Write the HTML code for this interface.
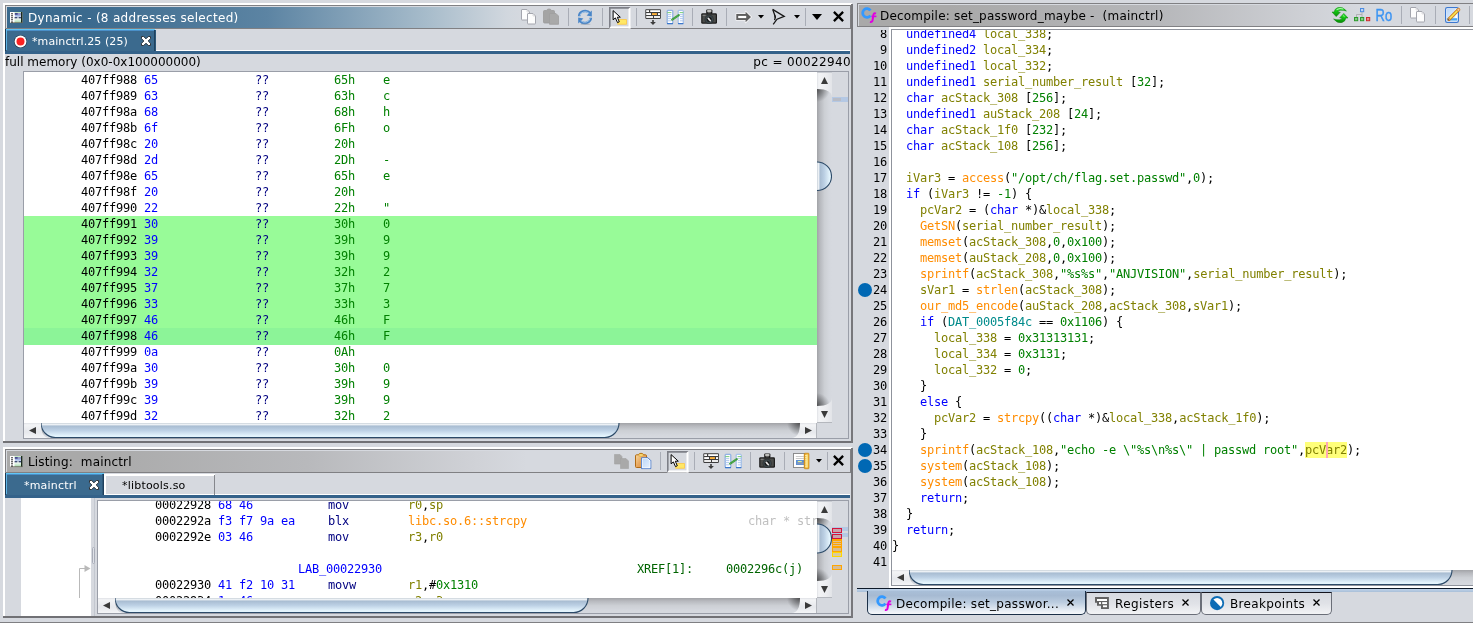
<!DOCTYPE html>
<html lang="en">
<head>
<meta charset="utf-8">
<title>Ghidra Debugger - mainctrl</title>
<style>
html,body{margin:0;padding:0;background:#d6d9df;}
body{width:1473px;height:623px;overflow:hidden;position:relative;font-family:"DejaVu Sans","Liberation Sans",sans-serif;font-size:12px;color:#000;}
#root{position:absolute;left:0;top:0;width:1473px;height:623px;overflow:hidden;will-change:transform;}
.a{position:absolute;}
.ui{position:absolute;font-family:"DejaVu Sans","Liberation Sans",sans-serif;font-size:12px;line-height:15px;white-space:pre;}
.mono{font-family:"DejaVu Sans Mono","Liberation Mono",monospace;font-size:12px;letter-spacing:-0.2246px;white-space:pre;line-height:16px;height:16px;}
.row{position:absolute;left:0;right:0;height:16px;}
.row span{position:absolute;top:0;}
.t{color:#0000ff}
.v{color:#808000}
.f{color:#ff8c00}
.c{color:#008000}
.g{color:#008b8b}
.n{color:#000080}
.gr{color:#008000}
.cm{color:#c0c0c0}
.xr{color:#006400}
.hl{background:#ffff7a;padding:1px 0}
.sep{position:absolute;width:1px;height:18px;background:#a9adb6;}
svg{position:absolute;overflow:visible;}
</style>
</head>
<body>
<div id="root">
<svg width="0" height="0" style="left:0;top:0"><defs><linearGradient id="vtr" x1="0" y1="0" x2="1" y2="0"><stop offset="0" stop-color="#a2a3a7"/><stop offset="0.2" stop-color="#b7b9be"/><stop offset="0.5" stop-color="#cccfd4"/><stop offset="0.8" stop-color="#d4d7dd"/><stop offset="1" stop-color="#d6d9df"/></linearGradient><linearGradient id="htr" x1="0" y1="0" x2="0" y2="1"><stop offset="0" stop-color="#a2a3a7"/><stop offset="0.2" stop-color="#b7b9be"/><stop offset="0.5" stop-color="#cccfd4"/><stop offset="0.8" stop-color="#d4d7dd"/><stop offset="1" stop-color="#d6d9df"/></linearGradient><linearGradient id="vth" x1="0" y1="0" x2="1" y2="0"><stop offset="0" stop-color="#c8d0d8"/><stop offset="0.1" stop-color="#eef2f6"/><stop offset="0.22" stop-color="#a9bdd2"/><stop offset="0.5" stop-color="#bcd0e4"/><stop offset="0.9" stop-color="#e6f6fe"/><stop offset="1" stop-color="#dff0fa"/></linearGradient><linearGradient id="hth" x1="0" y1="0" x2="0" y2="1"><stop offset="0" stop-color="#c8d0d8"/><stop offset="0.1" stop-color="#eef2f6"/><stop offset="0.22" stop-color="#a9bdd2"/><stop offset="0.5" stop-color="#bcd0e4"/><stop offset="0.9" stop-color="#e6f6fe"/><stop offset="1" stop-color="#dff0fa"/></linearGradient><linearGradient id="vbt" x1="0" y1="0" x2="1" y2="0"><stop offset="0" stop-color="#dfe1e5"/><stop offset="0.12" stop-color="#f3f4f6"/><stop offset="0.6" stop-color="#ecedf0"/><stop offset="1" stop-color="#e2e4e8"/></linearGradient><linearGradient id="hbt" x1="0" y1="0" x2="0" y2="1"><stop offset="0" stop-color="#dfe1e5"/><stop offset="0.12" stop-color="#f3f4f6"/><stop offset="0.6" stop-color="#e6e8ec"/><stop offset="1" stop-color="#f4f5f7"/></linearGradient><radialGradient id="rsh" cx="0" cy="0" r="1" gradientUnits="objectBoundingBox"><stop offset="0" stop-color="#000" stop-opacity="0.52"/><stop offset="0.45" stop-color="#000" stop-opacity="0.3"/><stop offset="1" stop-color="#000" stop-opacity="0"/></radialGradient></defs></svg>
<!-- pane bevels -->
<div class="a" style="left:3px;top:3px;width:849px;height:2px;background:#fff;"></div>
<div class="a" style="left:3px;top:3px;width:2px;height:438px;background:#fff;"></div>
<div class="a" style="left:3px;top:441px;width:850px;height:2px;background:#717175;"></div>
<div class="a" style="left:851px;top:4px;width:2px;height:439px;background:#77777b;"></div>
<div class="a" style="left:3px;top:447px;width:849px;height:2px;background:#fff;"></div>
<div class="a" style="left:3px;top:447px;width:2px;height:169px;background:#fff;"></div>
<div class="a" style="left:3px;top:616px;width:850px;height:2px;background:#717175;"></div>
<div class="a" style="left:851px;top:448px;width:2px;height:170px;background:#77777b;"></div>
<div class="a" style="left:0px;top:622px;width:1473px;height:1px;background:#7f7f82;"></div>
<!-- Dynamic listing panel -->
<div class="a" style="left:5px;top:5px;width:846px;height:24px;border:1px solid #808083;box-sizing:border-box;background:#d6d9df;"></div><div class="a" style="left:7px;top:7px;width:842px;height:21px;background:linear-gradient(90deg,#3a6a8e 0px,#3b6a8e 80px,#5c84a3 260px,#a7bccb 420px,#d1d7de 500px,#d6d9df 520px);"></div>
<svg style="left:10px;top:12px" width="13" height="11" viewBox="0 0 13 11"><defs><linearGradient id="pg" x1="0" y1="0" x2="0" y2="1"><stop offset="0" stop-color="#b8e8b0"/><stop offset="0.15" stop-color="#e8eefc"/><stop offset="0.6" stop-color="#f4fbf4"/><stop offset="0.85" stop-color="#bfe6c6"/><stop offset="1" stop-color="#9ab89a"/></linearGradient></defs><rect x="0" y="0" width="12.5" height="11" fill="#fff"/><rect x="4.5" y="0" width="7" height="11" fill="url(#pg)"/><rect x="11" y="0" width="1.5" height="11" fill="#1c2a1c"/><rect x="0.5" y="10.2" width="12" height="0.9" fill="#6a6a5a" opacity="0.8"/><circle cx="2" cy="1.70" r="0.75" fill="#000"/><circle cx="2" cy="3.75" r="0.75" fill="#000"/><circle cx="2" cy="5.80" r="0.75" fill="#000"/><circle cx="2" cy="7.85" r="0.75" fill="#000"/><circle cx="2" cy="9.90" r="0.75" fill="#000"/><rect x="4.8" y="1.2" width="3" height="1.5" fill="#1c2270"/><rect x="7.8" y="1.5" width="3.2" height="1" fill="#4a4aa0"/><rect x="5" y="3" width="5.8" height="1.6" fill="#8aa2e0" opacity="0.8"/><rect x="4.6" y="5.2" width="2.8" height="1.1" fill="#0e2050"/><rect x="8.6" y="5.2" width="2.6" height="1.1" fill="#0e2050"/></svg>
<div class="ui" style="left:28px;top:11px;color:#fff;letter-spacing:0.3px;">Dynamic - (8 addresses selected)</div>
<svg style="left:521px;top:9px" width="15" height="16" viewBox="0 0 15 16"><path d="M0.5,1 Q0.5,0.5 1,0.5 H6 L8.5,3 V10.5 Q8.5,11 8,11 H1 Q0.5,11 0.5,10.5 Z" fill="#fdfdfd" stroke="#a4a6ae" stroke-width="1"/><path d="M6.5,5 Q6.5,4.5 7,4.5 H12 L14.5,7 V14.5 Q14.5,15 14,15 H7 Q6.5,15 6.5,14.5 Z" fill="#fdfdfd" stroke="#a4a6ae" stroke-width="1"/><path d="M6,0.8 V3 H8.3" fill="none" stroke="#d0d0d4" stroke-width="0.7"/><path d="M12,4.8 V7 H14.3" fill="none" stroke="#d0d0d4" stroke-width="0.7"/></svg>
<svg style="left:543px;top:9px" width="16" height="16" viewBox="0 0 16 16"><path d="M1.5,1.5 H3.5 Q4,0 6,0 Q8,0 8.5,1.5 H10.5 Q11.5,1.5 11.5,2.5 V13 Q11.5,14 10.5,14 H1.5 Q0.5,14 0.5,13 V2.5 Q0.5,1.5 1.5,1.5 Z" fill="#a4a4a4" stroke="#9a9a9a" stroke-width="0.8"/><path d="M6.5,4.5 H13 L15.5,7 V15.3 H6.5 Z" fill="#a9a9a9" stroke="#9e9e9e" stroke-width="0.8"/></svg>
<div class="sep" style="left:568px;top:8px"></div>
<div class="sep" style="left:602px;top:8px"></div>
<div class="sep" style="left:636px;top:8px"></div>
<div class="sep" style="left:692px;top:8px"></div>
<div class="sep" style="left:726px;top:8px"></div>
<div class="sep" style="left:805px;top:8px"></div>
<svg style="left:578px;top:10px" width="14" height="15" viewBox="0 0 14 15"><path d="M1.2,6.2 A6,5.2 0 0 1 12,3.2" fill="none" stroke="#4a86c8" stroke-width="2.6"/><path d="M13.8,0.6 L13.8,6.4 L8.6,5.4 Z" fill="#4a86c8"/><path d="M12.8,7.8 A6,5.2 0 0 1 2,10.8" fill="none" stroke="#4a86c8" stroke-width="2.6"/><path d="M0.2,13.4 L0.2,7.6 L5.4,8.6 Z" fill="#4a86c8"/><path d="M2,5.6 A5.2,4.4 0 0 1 11.2,3.4" fill="none" stroke="#b8d4f0" stroke-width="0.8"/><path d="M12,8.4 A5.2,4.4 0 0 1 2.8,10.6" fill="none" stroke="#b8d4f0" stroke-width="0.8"/><ellipse cx="7.5" cy="14.2" rx="5" ry="0.7" fill="#9098a4" opacity="0.5"/></svg>
<svg style="left:608.5px;top:6.6px" width="22" height="22" viewBox="0 0 22 22"><rect x="0" y="0" width="21.5" height="21.4" fill="#d6d9df"/><rect x="0.6" y="19.4" width="20.9" height="2" fill="#fff"/><rect x="19.5" y="0.6" width="2" height="20.799999999999997" fill="#fff"/><path d="M0,0 H21.5 L19.5,1.8 H1.6 V19.4 L0,21.4 Z" fill="#7e8088"/><rect x="8.8" y="12.6" width="8.6" height="4.6" fill="#ffe866" stroke="#ffc840" stroke-width="0.8"/><path d="M4.1,3.6 L4.1,12.8 L6.4,10.9 L8.5,15.6 L10.3,14.8 L8.3,10.2 L11.3,10.2 Z" fill="#fff" stroke="#000" stroke-width="1" stroke-linejoin="miter"/></svg>
<svg style="left:645px;top:9px" width="16" height="16" viewBox="0 0 16 16"><rect x="0.3" y="0.3" width="15.6" height="9.6" rx="0.8" fill="#3d3d3d"/><rect x="1.2" y="1.2" width="2.8" height="1.8" fill="#fff"/><rect x="5.2" y="1.2" width="9.8" height="1.8" fill="#fff"/><rect x="1.2" y="4.1" width="4.8" height="1.9" fill="#fff"/><rect x="7" y="4.1" width="4.9" height="1.9" fill="#fbb03b"/><rect x="13" y="4.1" width="2" height="1.9" fill="#fff"/><rect x="1.2" y="7.1" width="6.8" height="1.8" fill="#fff"/><rect x="9" y="7.1" width="6" height="1.8" fill="#fff"/><path d="M7.2,11 H8.8 V13 H10.9 L8,16 L5.1,13 H7.2 Z" fill="#3d3d3d"/></svg>
<svg style="left:667px;top:10px" width="17" height="15" viewBox="0 0 17 15"><rect x="0.2" y="0.3" width="5.6" height="13.4" rx="0.6" fill="#fff" stroke="#6a98dc" stroke-width="0.9"/><rect x="11.2" y="0.3" width="5" height="13.4" rx="0.6" fill="#fff" stroke="#8ab0e8" stroke-width="0.9"/><rect x="0" y="13" width="6" height="1.2" fill="#3c78cc"/><rect x="11" y="13" width="5.4" height="1.2" fill="#3c78cc"/><rect x="0.2" y="2.1" width="4.2" height="1" fill="#7acc7a"/><rect x="12.6" y="2.1" width="3.8" height="1" fill="#7acc7a"/><rect x="0.4" y="4.2" width="3.8" height="0.9" fill="#a8c4ec"/><rect x="12.8" y="4.2" width="3.4" height="0.9" fill="#a8c4ec"/><rect x="0.4" y="6.2" width="3.8" height="0.9" fill="#a8c4ec"/><rect x="12.8" y="6.2" width="3.4" height="0.9" fill="#a8c4ec"/><rect x="0.4" y="8.2" width="3.8" height="0.9" fill="#a8c4ec"/><rect x="12.8" y="8.2" width="3.4" height="0.9" fill="#a8c4ec"/><rect x="0.4" y="10.4" width="3.8" height="0.9" fill="#a8c4ec"/><rect x="12.8" y="10.4" width="3.4" height="0.9" fill="#a8c4ec"/><path d="M5.2,9.6 L11.8,5.2" fill="none" stroke="#3c9a3c" stroke-width="2.2" stroke-linecap="round"/><path d="M5.2,9.6 L11.8,5.2" fill="none" stroke="#7ad07a" stroke-width="0.6" stroke-dasharray="1 1"/></svg>
<svg style="left:701px;top:9px" width="16" height="16" viewBox="0 0 16 16"><defs><radialGradient id="ln" cx="0.5" cy="0.5" r="0.5"><stop offset="0" stop-color="#9a9a9a"/><stop offset="0.35" stop-color="#101010"/><stop offset="0.7" stop-color="#3e4a4e"/><stop offset="1" stop-color="#2a2e30"/></radialGradient></defs><rect x="5.2" y="0.4" width="6.2" height="4.6" rx="1" fill="#1a1a1a"/><rect x="6.2" y="1.2" width="4.2" height="1.6" fill="#e8e8e4"/><rect x="6.6" y="3.6" width="3.2" height="0.9" fill="#d8d8d8"/><rect x="0.2" y="4.2" width="15.8" height="10.6" rx="1.4" fill="#1c1c1c"/><rect x="1.4" y="5.6" width="13.4" height="8" rx="0.6" fill="#4a4c4a"/><circle cx="8.2" cy="10.4" r="4.6" fill="url(#ln)"/><path d="M7.2,9.2 L9.4,11.8" stroke="#e8e8e8" stroke-width="1.5" stroke-linecap="round"/><rect x="1.6" y="5.8" width="3" height="1" fill="#8a8a8a"/></svg>
<svg style="left:736px;top:12px" width="16" height="10" viewBox="0 0 16 10"><path d="M0.3,2 H9.6 V-0.4 L15.2,5 L9.6,10.4 V8 H0.3 Z" fill="#fff" stroke="#f4f4f6" stroke-width="1.6" stroke-linejoin="round"/><path d="M0.3,2 H9.6 V-0.2 L15,5 L9.6,10.2 V8 H0.3 Z" fill="#5e5e5e"/><rect x="2.2" y="3.9" width="8" height="2.2" fill="#fff"/></svg>
<svg style="left:757.5px;top:15px" width="6" height="4" viewBox="0 0 6 4"><path d="M0,0 H6 L3,3.6 Z" fill="#000"/></svg>
<svg style="left:771.5px;top:9px" width="13" height="16" viewBox="0 0 13 16"><path d="M0.6,0.4 L12.2,7.4 L5,10.2 L1.2,15.4" fill="none" stroke="#161616" stroke-width="1.3" stroke-linejoin="miter"/><path d="M0.8,0.6 L3.4,8 L2.6,11.2" fill="none" stroke="#161616" stroke-width="1.3"/><path d="M2.2,5.6 L3.6,6.4 L3.4,9.2 L2.4,8.6 Z" fill="#161616"/></svg>
<svg style="left:793.5px;top:15px" width="6" height="4" viewBox="0 0 6 4"><path d="M0,0 H6 L3,3.6 Z" fill="#000"/></svg>
<svg style="left:812px;top:14px" width="10" height="6" viewBox="0 0 10 6"><path d="M0,0 H10 L5,6 Z" fill="#000"/></svg>
<svg style="left:833px;top:11px" width="11" height="11" viewBox="0 0 11 11"><path d="M0.9,0.9 L10.1,10.1 M10.1,0.9 L0.9,10.1" stroke="#000" stroke-width="2.3" fill="none"/></svg>
<div class="a" style="left:156px;top:50px;width:694px;height:1px;background:#fff;"></div>
<div class="a" style="left:5px;top:29px;width:150px;height:22px;background:#3b6a8e;"></div>
<div class="a" style="left:5px;top:29px;width:150px;height:1px;background:#5fc6f6;"></div>
<div class="a" style="left:5px;top:30px;width:150px;height:1px;background:#4a8fc8;"></div>
<div class="a" style="left:5px;top:29px;width:1px;height:22px;background:#1b3750;"></div>
<div class="a" style="left:6px;top:30px;width:1px;height:20px;background:#5fb4e6;"></div>
<div class="a" style="left:154px;top:30px;width:1px;height:21px;background:#1f425f;"></div>
<div class="a" style="left:155px;top:30px;width:1px;height:21px;background:#2e5878;"></div>
<div class="a" style="left:5px;top:51px;width:845px;height:3px;background:#34628a;"></div>
<svg style="left:13.5px;top:34.5px" width="13" height="13" viewBox="0 0 13 13"><circle cx="6.5" cy="6.5" r="6.6" fill="#1c2c3c" opacity="0.7"/><circle cx="6.5" cy="6.5" r="5.9" fill="#fff"/><circle cx="6.5" cy="6.5" r="4" fill="#fa2222"/></svg>
<div class="ui" style="left:32px;top:34px;color:#fff;font-size:11px;letter-spacing:0.08px">*mainctrl.25 (25)</div>
<svg style="left:141px;top:36px" width="10" height="10" viewBox="0 0 10 10"><path d="M0.5,0.5 H2.7 L5,2.8 L7.3,0.5 H9.5 V2.7 L7.2,5 L9.5,7.3 V9.5 H7.3 L5,7.2 L2.7,9.5 H0.5 V7.3 L2.8,5 L0.5,2.7 Z" fill="#fff" stroke="#2e3338" stroke-width="1" stroke-linejoin="miter"/></svg>
<div class="ui" style="left:5px;top:55px;">full memory (0x0-0x100000000)</div>
<div class="ui" style="left:651px;width:200px;text-align:right;top:55px;letter-spacing:0.36px">pc = 00022940</div>
<div class="a" style="left:23px;top:71px;width:826px;height:368px;border:1px solid #9a9ea8;box-sizing:border-box;"></div>
<div class="a" id="dyn" style="left:24px;top:72px;width:793px;height:351px;background:#fff;overflow:hidden;">
<div class="row mono" style="top:0px;"><span style="left:57px">407ff988</span><span class="t" style="left:120px">65</span><span class="n" style="left:231px">??</span><span class="gr" style="left:310px">65h</span><span class="gr" style="left:359px">e</span></div>
<div class="row mono" style="top:16px;"><span style="left:57px">407ff989</span><span class="t" style="left:120px">63</span><span class="n" style="left:231px">??</span><span class="gr" style="left:310px">63h</span><span class="gr" style="left:359px">c</span></div>
<div class="row mono" style="top:32px;"><span style="left:57px">407ff98a</span><span class="t" style="left:120px">68</span><span class="n" style="left:231px">??</span><span class="gr" style="left:310px">68h</span><span class="gr" style="left:359px">h</span></div>
<div class="row mono" style="top:48px;"><span style="left:57px">407ff98b</span><span class="t" style="left:120px">6f</span><span class="n" style="left:231px">??</span><span class="gr" style="left:310px">6Fh</span><span class="gr" style="left:359px">o</span></div>
<div class="row mono" style="top:64px;"><span style="left:57px">407ff98c</span><span class="t" style="left:120px">20</span><span class="n" style="left:231px">??</span><span class="gr" style="left:310px">20h</span></div>
<div class="row mono" style="top:80px;"><span style="left:57px">407ff98d</span><span class="t" style="left:120px">2d</span><span class="n" style="left:231px">??</span><span class="gr" style="left:310px">2Dh</span><span class="gr" style="left:359px">-</span></div>
<div class="row mono" style="top:96px;"><span style="left:57px">407ff98e</span><span class="t" style="left:120px">65</span><span class="n" style="left:231px">??</span><span class="gr" style="left:310px">65h</span><span class="gr" style="left:359px">e</span></div>
<div class="row mono" style="top:112px;"><span style="left:57px">407ff98f</span><span class="t" style="left:120px">20</span><span class="n" style="left:231px">??</span><span class="gr" style="left:310px">20h</span></div>
<div class="row mono" style="top:128px;"><span style="left:57px">407ff990</span><span class="t" style="left:120px">22</span><span class="n" style="left:231px">??</span><span class="gr" style="left:310px">22h</span><span class="gr" style="left:359px">&quot;</span></div>
<div class="row mono" style="top:144px;background:#98fb98;"><span style="left:57px">407ff991</span><span class="t" style="left:120px">30</span><span class="n" style="left:231px">??</span><span class="gr" style="left:310px">30h</span><span class="gr" style="left:359px">0</span></div>
<div class="row mono" style="top:160px;background:#98fb98;"><span style="left:57px">407ff992</span><span class="t" style="left:120px">39</span><span class="n" style="left:231px">??</span><span class="gr" style="left:310px">39h</span><span class="gr" style="left:359px">9</span></div>
<div class="row mono" style="top:176px;background:#98fb98;"><span style="left:57px">407ff993</span><span class="t" style="left:120px">39</span><span class="n" style="left:231px">??</span><span class="gr" style="left:310px">39h</span><span class="gr" style="left:359px">9</span></div>
<div class="row mono" style="top:192px;background:#98fb98;"><span style="left:57px">407ff994</span><span class="t" style="left:120px">32</span><span class="n" style="left:231px">??</span><span class="gr" style="left:310px">32h</span><span class="gr" style="left:359px">2</span></div>
<div class="row mono" style="top:208px;background:#98fb98;"><span style="left:57px">407ff995</span><span class="t" style="left:120px">37</span><span class="n" style="left:231px">??</span><span class="gr" style="left:310px">37h</span><span class="gr" style="left:359px">7</span></div>
<div class="row mono" style="top:224px;background:#98fb98;"><span style="left:57px">407ff996</span><span class="t" style="left:120px">33</span><span class="n" style="left:231px">??</span><span class="gr" style="left:310px">33h</span><span class="gr" style="left:359px">3</span></div>
<div class="row mono" style="top:240px;background:#98fb98;"><span style="left:57px">407ff997</span><span class="t" style="left:120px">46</span><span class="n" style="left:231px">??</span><span class="gr" style="left:310px">46h</span><span class="gr" style="left:359px">F</span></div>
<div class="row mono" style="top:256px;background:#8cf498;height:17px;"><span style="left:57px">407ff998</span><span class="t" style="left:120px">46</span><span class="n" style="left:231px">??</span><span class="gr" style="left:310px">46h</span><span class="gr" style="left:359px">F</span></div>
<div class="row mono" style="top:272px;"><span style="left:57px">407ff999</span><span class="t" style="left:120px">0a</span><span class="n" style="left:231px">??</span><span class="gr" style="left:310px">0Ah</span></div>
<div class="row mono" style="top:288px;"><span style="left:57px">407ff99a</span><span class="t" style="left:120px">30</span><span class="n" style="left:231px">??</span><span class="gr" style="left:310px">30h</span><span class="gr" style="left:359px">0</span></div>
<div class="row mono" style="top:304px;"><span style="left:57px">407ff99b</span><span class="t" style="left:120px">39</span><span class="n" style="left:231px">??</span><span class="gr" style="left:310px">39h</span><span class="gr" style="left:359px">9</span></div>
<div class="row mono" style="top:320px;"><span style="left:57px">407ff99c</span><span class="t" style="left:120px">39</span><span class="n" style="left:231px">??</span><span class="gr" style="left:310px">39h</span><span class="gr" style="left:359px">9</span></div>
<div class="row mono" style="top:336px;"><span style="left:57px">407ff99d</span><span class="t" style="left:120px">32</span><span class="n" style="left:231px">??</span><span class="gr" style="left:310px">32h</span><span class="gr" style="left:359px">2</span></div>
</div>
<div class="a" style="left:817px;top:72px;width:15px;height:351px;overflow:hidden;"><svg style="left:0px;top:0px" width="15" height="351" viewBox="0 0 15 351"><rect x="0" y="0" width="15" height="351" fill="url(#vtr)"/><rect x="0" y="17" width="13" height="13" fill="url(#rsh)"/><rect x="0" y="0" width="13" height="13" fill="url(#rsh)" transform="translate(0,334) scale(1,-1)"/><path d="M0,90 A14.5,14.25 0 0 1 14.5,104.25 V104.25 A14.5,14.25 0 0 1 0,118.5 Z" fill="url(#vth)"/><path d="M0,90 A14.5,14.25 0 0 1 14.5,104.25 V104.25 A14.5,14.25 0 0 1 0,118.5" fill="none" stroke="#2c4a68" stroke-width="1.1"/><path d="M0,0 H15 V25.5 C15,20 10,17 0,17 Z" fill="url(#vbt)"/><rect x="0" y="0" width="15" height="1" fill="#c9ccd2"/><path d="M4,12 L7.5,5 L11,12 Z" fill="#3a3a3a"/><path d="M0,351 H15 V325.5 C15,331 10,334 0,334 Z" fill="url(#vbt)"/><rect x="0" y="350" width="15" height="1" fill="#b4b7bd"/><path d="M4,339 L7.5,346 L11,339 Z" fill="#3a3a3a"/></svg></div>
<div class="a" style="left:24px;top:423px;width:793px;height:15px;overflow:hidden;"><svg style="left:0px;top:0px" width="793" height="15" viewBox="0 0 793 15"><rect x="0" y="0" width="793" height="15" fill="url(#htr)"/><rect x="17" y="0" width="13" height="13" fill="url(#rsh)"/><rect x="0" y="0" width="13" height="13" fill="url(#rsh)" transform="translate(776,0) scale(-1,1)"/><path d="M17,0 A14.25,14.5 0 0 0 31.25,14.5 H580.75 A14.25,14.5 0 0 0 595,0 Z" fill="url(#hth)"/><path d="M17,0 A14.25,14.5 0 0 0 31.25,14.5 H580.75 A14.25,14.5 0 0 0 595,0" fill="none" stroke="#2c4a68" stroke-width="1.1"/><path d="M0,0 V15 H25.5 C20,15 17,10 17,0 Z" fill="url(#hbt)"/><path d="M12,4 L5,7.5 L12,11 Z" fill="#3a3a3a"/><path d="M793,0 V15 H767.5 C773,15 776,10 776,0 Z" fill="url(#hbt)"/><rect x="792" y="0" width="1" height="15" fill="#b4b7bd"/><path d="M781,4 L788,7.5 L781,11 Z" fill="#3a3a3a"/></svg></div>
<div class="a" style="left:832px;top:97px;width:16px;height:5px;background:#b4c8e4;"></div>
<div class="a" style="left:833px;top:98px;width:8px;height:3px;background:#b8bcc6;"></div>
<!-- Listing panel -->
<div class="a" style="left:5px;top:449px;width:846px;height:24px;border:1px solid #808083;box-sizing:border-box;background:#d6d9df;"></div><div class="a" style="left:7px;top:451px;width:842px;height:21px;background:linear-gradient(90deg,#a9a9a9 0px,#a9a9a9 80px,#b8b9bc 300px,#d0d2d7 470px,#d6d9df 520px);"></div>
<svg style="left:10px;top:456px" width="13" height="11" viewBox="0 0 13 11"><defs><linearGradient id="pg" x1="0" y1="0" x2="0" y2="1"><stop offset="0" stop-color="#b8e8b0"/><stop offset="0.15" stop-color="#e8eefc"/><stop offset="0.6" stop-color="#f4fbf4"/><stop offset="0.85" stop-color="#bfe6c6"/><stop offset="1" stop-color="#9ab89a"/></linearGradient></defs><rect x="0" y="0" width="12.5" height="11" fill="#fff"/><rect x="4.5" y="0" width="7" height="11" fill="url(#pg)"/><rect x="11" y="0" width="1.5" height="11" fill="#1c2a1c"/><rect x="0.5" y="10.2" width="12" height="0.9" fill="#6a6a5a" opacity="0.8"/><circle cx="2" cy="1.70" r="0.75" fill="#000"/><circle cx="2" cy="3.75" r="0.75" fill="#000"/><circle cx="2" cy="5.80" r="0.75" fill="#000"/><circle cx="2" cy="7.85" r="0.75" fill="#000"/><circle cx="2" cy="9.90" r="0.75" fill="#000"/><rect x="4.8" y="1.2" width="3" height="1.5" fill="#1c2270"/><rect x="7.8" y="1.5" width="3.2" height="1" fill="#4a4aa0"/><rect x="5" y="3" width="5.8" height="1.6" fill="#8aa2e0" opacity="0.8"/><rect x="4.6" y="5.2" width="2.8" height="1.1" fill="#0e2050"/><rect x="8.6" y="5.2" width="2.6" height="1.1" fill="#0e2050"/></svg>
<div class="ui" style="left:28px;top:455px;letter-spacing:0.16px;">Listing:  mainctrl</div>
<svg style="left:613.5px;top:454px" width="15" height="15" viewBox="0 0 15 15"><path d="M0.5,0.5 H6 L8,2.5 V10 H0.5 Z" fill="#a9a9a9" stroke="#a3a3a3" stroke-width="0.6"/><path d="M6.5,4.5 H12 L14.5,7 V14.5 H6.5 Z" fill="#a9a9a9" stroke="#a3a3a3" stroke-width="0.6"/></svg>
<svg style="left:635px;top:453px" width="16" height="16" viewBox="0 0 16 16"><defs><linearGradient id="cb" x1="0" y1="0" x2="1" y2="1"><stop offset="0" stop-color="#f8e0a8"/><stop offset="0.5" stop-color="#e8a860"/><stop offset="1" stop-color="#d88838"/></linearGradient><linearGradient id="pp" x1="0" y1="0" x2="1" y2="1"><stop offset="0" stop-color="#b8d4f8"/><stop offset="1" stop-color="#e8f2fe"/></linearGradient></defs><path d="M1.5,1.8 H3.5 Q4,0.3 6,0.3 Q8,0.3 8.5,1.8 H10.5 Q11.5,1.8 11.5,2.8 V13.5 Q11.5,14.5 10.5,14.5 H1.5 Q0.5,14.5 0.5,13.5 V2.8 Q0.5,1.8 1.5,1.8 Z" fill="url(#cb)" stroke="#b06a14" stroke-width="1"/><rect x="4" y="1" width="4" height="2" fill="#fce88a" stroke="#d89820" stroke-width="0.5"/><path d="M6.5,4.8 H13 L15.8,7.6 V15.6 H6.5 Z" fill="url(#pp)" stroke="#4878c8" stroke-width="1"/><path d="M7.3,5.6 H12.6 L15,8 V14.8 H7.3 Z" fill="none" stroke="#fff" stroke-width="0.7"/></svg>
<div class="sep" style="left:660px;top:452px"></div>
<div class="sep" style="left:694px;top:452px"></div>
<div class="sep" style="left:750px;top:452px"></div>
<div class="sep" style="left:784px;top:452px"></div>
<div class="sep" style="left:827px;top:452px"></div>
<svg style="left:666.5px;top:450.6px" width="22" height="22" viewBox="0 0 22 22"><rect x="0" y="0" width="21.5" height="21.4" fill="#d6d9df"/><rect x="0.6" y="19.4" width="20.9" height="2" fill="#fff"/><rect x="19.5" y="0.6" width="2" height="20.799999999999997" fill="#fff"/><path d="M0,0 H21.5 L19.5,1.8 H1.6 V19.4 L0,21.4 Z" fill="#7e8088"/><rect x="8.8" y="12.6" width="8.6" height="4.6" fill="#ffe866" stroke="#ffc840" stroke-width="0.8"/><path d="M4.1,3.6 L4.1,12.8 L6.4,10.9 L8.5,15.6 L10.3,14.8 L8.3,10.2 L11.3,10.2 Z" fill="#fff" stroke="#000" stroke-width="1" stroke-linejoin="miter"/></svg>
<svg style="left:703px;top:453px" width="16" height="16" viewBox="0 0 16 16"><rect x="0.3" y="0.3" width="15.6" height="9.6" rx="0.8" fill="#3d3d3d"/><rect x="1.2" y="1.2" width="2.8" height="1.8" fill="#fff"/><rect x="5.2" y="1.2" width="9.8" height="1.8" fill="#fff"/><rect x="1.2" y="4.1" width="4.8" height="1.9" fill="#fff"/><rect x="7" y="4.1" width="4.9" height="1.9" fill="#fbb03b"/><rect x="13" y="4.1" width="2" height="1.9" fill="#fff"/><rect x="1.2" y="7.1" width="6.8" height="1.8" fill="#fff"/><rect x="9" y="7.1" width="6" height="1.8" fill="#fff"/><path d="M7.2,11 H8.8 V13 H10.9 L8,16 L5.1,13 H7.2 Z" fill="#3d3d3d"/></svg>
<svg style="left:725px;top:454px" width="17" height="15" viewBox="0 0 17 15"><rect x="0.2" y="0.3" width="5.6" height="13.4" rx="0.6" fill="#fff" stroke="#6a98dc" stroke-width="0.9"/><rect x="11.2" y="0.3" width="5" height="13.4" rx="0.6" fill="#fff" stroke="#8ab0e8" stroke-width="0.9"/><rect x="0" y="13" width="6" height="1.2" fill="#3c78cc"/><rect x="11" y="13" width="5.4" height="1.2" fill="#3c78cc"/><rect x="0.2" y="2.1" width="4.2" height="1" fill="#7acc7a"/><rect x="12.6" y="2.1" width="3.8" height="1" fill="#7acc7a"/><rect x="0.4" y="4.2" width="3.8" height="0.9" fill="#a8c4ec"/><rect x="12.8" y="4.2" width="3.4" height="0.9" fill="#a8c4ec"/><rect x="0.4" y="6.2" width="3.8" height="0.9" fill="#a8c4ec"/><rect x="12.8" y="6.2" width="3.4" height="0.9" fill="#a8c4ec"/><rect x="0.4" y="8.2" width="3.8" height="0.9" fill="#a8c4ec"/><rect x="12.8" y="8.2" width="3.4" height="0.9" fill="#a8c4ec"/><rect x="0.4" y="10.4" width="3.8" height="0.9" fill="#a8c4ec"/><rect x="12.8" y="10.4" width="3.4" height="0.9" fill="#a8c4ec"/><path d="M5.2,9.6 L11.8,5.2" fill="none" stroke="#3c9a3c" stroke-width="2.2" stroke-linecap="round"/><path d="M5.2,9.6 L11.8,5.2" fill="none" stroke="#7ad07a" stroke-width="0.6" stroke-dasharray="1 1"/></svg>
<svg style="left:759px;top:453px" width="16" height="16" viewBox="0 0 16 16"><defs><radialGradient id="ln" cx="0.5" cy="0.5" r="0.5"><stop offset="0" stop-color="#9a9a9a"/><stop offset="0.35" stop-color="#101010"/><stop offset="0.7" stop-color="#3e4a4e"/><stop offset="1" stop-color="#2a2e30"/></radialGradient></defs><rect x="5.2" y="0.4" width="6.2" height="4.6" rx="1" fill="#1a1a1a"/><rect x="6.2" y="1.2" width="4.2" height="1.6" fill="#e8e8e4"/><rect x="6.6" y="3.6" width="3.2" height="0.9" fill="#d8d8d8"/><rect x="0.2" y="4.2" width="15.8" height="10.6" rx="1.4" fill="#1c1c1c"/><rect x="1.4" y="5.6" width="13.4" height="8" rx="0.6" fill="#4a4c4a"/><circle cx="8.2" cy="10.4" r="4.6" fill="url(#ln)"/><path d="M7.2,9.2 L9.4,11.8" stroke="#e8e8e8" stroke-width="1.5" stroke-linecap="round"/><rect x="1.6" y="5.8" width="3" height="1" fill="#8a8a8a"/></svg>
<svg style="left:793px;top:453px" width="16" height="16" viewBox="0 0 16 16"><rect x="0.5" y="0.5" width="11" height="14" fill="#fff" stroke="#2a2a2a" stroke-width="1" stroke-dasharray="1 1"/><rect x="2.8" y="3" width="8" height="0.9" fill="#c4c4c4"/><rect x="2.8" y="5" width="8" height="0.9" fill="#c4c4c4"/><rect x="3" y="7" width="8" height="5" fill="#5a90d8"/><rect x="4.8" y="8" width="4" height="1.2" fill="#e8f088"/><rect x="4" y="9.6" width="7" height="1.6" fill="#8a98b8"/><rect x="11.2" y="0.2" width="4.8" height="15.6" rx="0.8" fill="#e8a020" stroke="#c88408" stroke-width="0.6"/><rect x="12.6" y="1.4" width="2.6" height="13.2" fill="#f8dc78"/><rect x="12.2" y="2.0" width="1.4" height="0.8" fill="#fff8d0"/><rect x="12.2" y="3.9" width="1.4" height="0.8" fill="#fff8d0"/><rect x="12.2" y="5.8" width="1.4" height="0.8" fill="#fff8d0"/><rect x="12.2" y="7.7" width="1.4" height="0.8" fill="#fff8d0"/><rect x="12.2" y="9.6" width="1.4" height="0.8" fill="#fff8d0"/><rect x="12.2" y="11.5" width="1.4" height="0.8" fill="#fff8d0"/><rect x="12.2" y="13.4" width="1.4" height="0.8" fill="#fff8d0"/></svg>
<svg style="left:815.5px;top:459px" width="6" height="4" viewBox="0 0 6 4"><path d="M0,0 H6 L3,3.6 Z" fill="#000"/></svg>
<svg style="left:833px;top:455px" width="11" height="11" viewBox="0 0 11 11"><path d="M0.9,0.9 L10.1,10.1 M10.1,0.9 L0.9,10.1" stroke="#000" stroke-width="2.3" fill="none"/></svg>
<div class="a" style="left:5px;top:473px;width:99px;height:22px;background:#3b6a8e;"></div>
<div class="a" style="left:5px;top:473px;width:99px;height:1px;background:#5fc6f6;"></div>
<div class="a" style="left:5px;top:474px;width:99px;height:1px;background:#4a8fc8;"></div>
<div class="a" style="left:5px;top:473px;width:1px;height:22px;background:#1b3750;"></div>
<div class="a" style="left:6px;top:474px;width:1px;height:20px;background:#5fb4e6;"></div>
<div class="a" style="left:102px;top:474px;width:1px;height:21px;background:#2e5878;"></div>
<div class="a" style="left:103px;top:474px;width:1px;height:21px;background:#1f3f5c;"></div>
<div class="ui" style="left:24px;top:478px;color:#fff;font-size:11px;letter-spacing:0.2px">*mainctrl</div>
<svg style="left:89px;top:480px" width="10" height="10" viewBox="0 0 10 10"><path d="M0.5,0.5 H2.7 L5,2.8 L7.3,0.5 H9.5 V2.7 L7.2,5 L9.5,7.3 V9.5 H7.3 L5,7.2 L2.7,9.5 H0.5 V7.3 L2.8,5 L0.5,2.7 Z" fill="#fff" stroke="#2e3338" stroke-width="1" stroke-linejoin="miter"/></svg>
<div class="a" style="left:104px;top:474px;width:111px;height:21px;background:#d6d9df;"></div>
<div class="a" style="left:104px;top:474px;width:111px;height:2px;background:#fff;"></div>
<div class="a" style="left:104px;top:474px;width:2px;height:21px;background:#fff;"></div>
<div class="a" style="left:105px;top:494px;width:745px;height:1px;background:#fff;"></div>
<div class="a" style="left:214px;top:475px;width:1px;height:20px;background:#85878c;"></div>
<div class="ui" style="left:122px;top:478px;font-size:11px;letter-spacing:0.2px">*libtools.so</div>
<div class="a" style="left:5px;top:495px;width:845px;height:3px;background:#34628a;"></div>
<div class="a" style="left:21px;top:498px;width:70px;height:118px;background:#fff;"></div>
<div class="a" style="left:94px;top:498px;width:1px;height:118px;background:#c4c8d0;"></div>
<div class="a" style="left:92px;top:547px;width:3px;height:17px;border:1px solid #a9adb8;border-radius:2px;box-sizing:border-box;background:#dfe2e8"></div>
<svg style="left:76px;top:564px" width="16" height="36" viewBox="0 0 16 36"><path d="M3.5,34 V4.5 H9" fill="none" stroke="#b9b9b9" stroke-width="1"/><path d="M8.5,1 L14.5,4.5 L8.5,8 Z" fill="#b9b9b9"/></svg>
<div class="a" style="left:97px;top:500px;width:752px;height:114px;border:1px solid #9a9ea8;box-sizing:border-box;"></div>
<div class="a" id="lst" style="left:98px;top:501px;width:719px;height:97px;background:#fff;overflow:hidden;">
<div class="row mono" style="top:-4px"><span style="left:57px">00022928</span><span class="t" style="left:120px">68 46</span><span class="n" style="left:230px">mov</span><span class="v" style="left:310px">r0</span><span style="left:324px">,</span><span class="v" style="left:331px">sp</span></div>
<div class="row mono" style="top:12px"><span style="left:57px">0002292a</span><span class="t" style="left:120px">f3 f7 9a ea</span><span class="n" style="left:230px">blx</span><span class="f" style="left:310px">libc.so.6::strcpy</span><span class="cm" style="left:650px">char * str</span></div>
<div class="row mono" style="top:28px"><span style="left:57px">0002292e</span><span class="t" style="left:120px">03 46</span><span class="n" style="left:230px">mov</span><span class="v" style="left:310px">r3</span><span style="left:324px">,</span><span class="v" style="left:331px">r0</span></div>
<div class="row mono" style="top:60px"><span class="t" style="left:200px">LAB_00022930</span><span class="xr" style="left:539px">XREF[1]:</span><span class="xr" style="left:628px">0002296c(j)</span></div>
<div class="row mono" style="top:76px"><span style="left:57px">00022930</span><span class="t" style="left:120px">41 f2 10 31</span><span class="n" style="left:230px">movw</span><span class="v" style="left:310px">r1</span><span style="left:324px">,#</span><span class="gr" style="left:338px">0x1310</span></div>
<div class="row mono" style="top:92px"><span style="left:57px">00022934</span><span class="t" style="left:120px">1a 46</span><span class="n" style="left:230px">mov</span><span class="v" style="left:310px">r2</span><span style="left:324px">,</span><span class="v" style="left:331px">r3</span></div>
</div>
<div class="a" style="left:817px;top:501px;width:15px;height:97px;overflow:hidden;"><svg style="left:0px;top:0px" width="15" height="97" viewBox="0 0 15 97"><rect x="0" y="0" width="15" height="97" fill="url(#vtr)"/><rect x="0" y="17" width="13" height="13" fill="url(#rsh)"/><rect x="0" y="0" width="13" height="13" fill="url(#rsh)" transform="translate(0,80) scale(1,-1)"/><path d="M0,23 A14.5,14.25 0 0 1 14.5,37.25 V37.75 A14.5,14.25 0 0 1 0,52 Z" fill="url(#vth)"/><path d="M0,23 A14.5,14.25 0 0 1 14.5,37.25 V37.75 A14.5,14.25 0 0 1 0,52" fill="none" stroke="#2c4a68" stroke-width="1.1"/><path d="M0,0 H15 V25.5 C15,20 10,17 0,17 Z" fill="url(#vbt)"/><rect x="0" y="0" width="15" height="1" fill="#c9ccd2"/><path d="M4,12 L7.5,5 L11,12 Z" fill="#3a3a3a"/><path d="M0,97 H15 V71.5 C15,77 10,80 0,80 Z" fill="url(#vbt)"/><rect x="0" y="96" width="15" height="1" fill="#b4b7bd"/><path d="M4,85 L7.5,92 L11,85 Z" fill="#3a3a3a"/></svg></div>
<div class="a" style="left:98px;top:598px;width:719px;height:15px;overflow:hidden;"><svg style="left:0px;top:0px" width="719" height="15" viewBox="0 0 719 15"><rect x="0" y="0" width="719" height="15" fill="url(#htr)"/><rect x="17" y="0" width="13" height="13" fill="url(#rsh)"/><rect x="0" y="0" width="13" height="13" fill="url(#rsh)" transform="translate(702,0) scale(-1,1)"/><path d="M17,0 A14.25,14.5 0 0 0 31.25,14.5 H475.75 A14.25,14.5 0 0 0 490,0 Z" fill="url(#hth)"/><path d="M17,0 A14.25,14.5 0 0 0 31.25,14.5 H475.75 A14.25,14.5 0 0 0 490,0" fill="none" stroke="#2c4a68" stroke-width="1.1"/><path d="M0,0 V15 H25.5 C20,15 17,10 17,0 Z" fill="url(#hbt)"/><path d="M12,4 L5,7.5 L12,11 Z" fill="#3a3a3a"/><path d="M719,0 V15 H693.5 C699,15 702,10 702,0 Z" fill="url(#hbt)"/><rect x="718" y="0" width="1" height="15" fill="#b4b7bd"/><path d="M707,4 L714,7.5 L707,11 Z" fill="#3a3a3a"/></svg></div>
<div class="a" style="left:832px;top:527px;width:16px;height:4px;background:#b4c8e4;"></div>
<div class="a" style="left:832px;top:533px;width:16px;height:4px;background:#b4c8e4;"></div>
<div class="a" style="left:832px;top:528px;width:10px;height:5px;border:1px solid #d4143c;box-sizing:border-box;background:#c8a4ac"></div>
<div class="a" style="left:832px;top:534px;width:10px;height:5px;border:1px solid #d4143c;box-sizing:border-box;background:#c8a4ac"></div>
<div class="a" style="left:832px;top:539px;width:10px;height:13px;background:#ffa500;"></div>
<div class="a" style="left:833px;top:541px;width:8px;height:1px;background:#e0c090;"></div>
<div class="a" style="left:833px;top:543px;width:8px;height:1px;background:#e0c090;"></div>
<div class="a" style="left:833px;top:545px;width:8px;height:1px;background:#e0c090;"></div>
<div class="a" style="left:833px;top:548px;width:8px;height:3px;background:#d8bc90;"></div>
<div class="a" style="left:832px;top:552px;width:10px;height:5px;border:1px solid #ffd700;box-sizing:border-box;background:#d8cca0"></div>
<div class="a" style="left:832px;top:565px;width:10px;height:5px;border:1px solid #ffa500;box-sizing:border-box;background:#d4bc98"></div>
<!-- Decompile panel -->
<div class="a" style="left:857px;top:3px;width:620px;height:24px;border:1px solid #808083;box-sizing:border-box;background:#d6d9df;"></div>
<div class="a" style="left:859px;top:5px;width:614px;height:21px;background:linear-gradient(90deg,#a9a9a9 0px,#a9a9a9 90px,#b6b7ba 300px,#cfd1d6 450px,#d6d9df 500px);"></div>
<svg style="left:860.5px;top:6px" width="16" height="16" viewBox="0 0 16 16"><path d="M9.4,4.6 A4.2,4.4 0 1 0 9.4,9.4" fill="none" stroke="#3399ff" stroke-width="2.8"/><path d="M15,7.6 Q12.8,6.4 12.4,9 L11.6,14 Q11.2,16.6 9,15.8" fill="none" stroke="#e000e0" stroke-width="2"/><path d="M10.4,10.4 H15.4" stroke="#e000e0" stroke-width="1.6"/></svg>
<div class="ui" style="left:880px;top:9px;letter-spacing:0.2px;">Decompile: set_password_maybe -  (mainctrl)</div>
<svg style="left:1332px;top:7px" width="16" height="16" viewBox="0 0 16 16"><defs><linearGradient id="gg" x1="0" y1="0" x2="0" y2="1"><stop offset="0" stop-color="#38e838"/><stop offset="0.45" stop-color="#12c412"/><stop offset="1" stop-color="#0a8a0a"/></linearGradient></defs><path d="M14.4,4 Q11,-0.6 6,0.5 Q2.6,1.5 2.2,5 L0,5 L4.2,9.6 L8.3,5.2 L5.9,5 Q6.4,3.5 8.4,3.3 Q11.4,2.9 14.4,4 Z" fill="url(#gg)" stroke="#0a7c0a" stroke-width="0.5"/><path d="M1.6,12 Q5,16.6 10,15.5 Q13.4,14.5 13.8,11 L16,11 L11.8,6.4 L7.7,10.8 L10.1,11 Q9.6,12.5 7.6,12.7 Q4.6,13.1 1.6,12 Z" fill="url(#gg)" stroke="#0a7c0a" stroke-width="0.5"/><path d="M4.6,2.6 Q8,0.8 11.4,2" fill="none" stroke="#d8ffd8" stroke-width="0.9" opacity="0.9"/><path d="M11.2,8.6 L12.6,9.8" fill="none" stroke="#d8ffd8" stroke-width="0.9" opacity="0.8"/></svg>
<svg style="left:1354px;top:8px" width="16" height="13" viewBox="0 0 16 13"><path d="M8,4 V9 M2.5,9 V6.5 H8" fill="none" stroke="#a8a8a8" stroke-width="0.8"/><rect x="6.5" y="0.5" width="3.2" height="3.2" fill="#c0d4f4" stroke="#4c8ce0" stroke-width="1"/><rect x="0.5" y="9.5" width="3.2" height="3.2" fill="#88c888" stroke="#2c9c2c" stroke-width="1"/><rect x="6.5" y="9.5" width="3.2" height="3.2" fill="#88c888" stroke="#2c9c2c" stroke-width="1"/><rect x="12.5" y="9.5" width="3.2" height="3.2" fill="#e88888" stroke="#cc2c2c" stroke-width="1"/></svg>
<svg style="left:1375px;top:6px" width="19" height="17" viewBox="0 0 19 17"><text x="0.6" y="14.8" font-family="Liberation Sans, DejaVu Sans, sans-serif" font-size="16.5" fill="#3c94f2" stroke="#3c94f2" stroke-width="0.45" textLength="16.6" lengthAdjust="spacingAndGlyphs">Ro</text></svg>
<div class="sep" style="left:1401px;top:6px"></div>
<div class="sep" style="left:1435px;top:6px"></div>
<div class="sep" style="left:1469px;top:6px"></div>
<svg style="left:1410px;top:7px" width="15" height="16" viewBox="0 0 15 16"><path d="M0.5,1 Q0.5,0.5 1,0.5 H6 L8.5,3 V10.5 Q8.5,11 8,11 H1 Q0.5,11 0.5,10.5 Z" fill="#fdfdfd" stroke="#a4a6ae" stroke-width="1"/><path d="M6.5,5 Q6.5,4.5 7,4.5 H12 L14.5,7 V14.5 Q14.5,15 14,15 H7 Q6.5,15 6.5,14.5 Z" fill="#fdfdfd" stroke="#a4a6ae" stroke-width="1"/><path d="M6,0.8 V3 H8.3" fill="none" stroke="#d0d0d4" stroke-width="0.7"/><path d="M12,4.8 V7 H14.3" fill="none" stroke="#d0d0d4" stroke-width="0.7"/></svg>
<svg style="left:1445px;top:7px" width="15" height="16" viewBox="0 0 15 16"><defs><linearGradient id="ep" x1="0" y1="0" x2="1" y2="1"><stop offset="0" stop-color="#bcd8f8"/><stop offset="1" stop-color="#e4f0fe"/></linearGradient></defs><rect x="0.6" y="0.6" width="12.8" height="14.8" rx="1.6" fill="#fff" stroke="#3c78d0" stroke-width="1.2"/><rect x="1.8" y="1.8" width="8.6" height="9.6" fill="url(#ep)"/><rect x="1.8" y="11.2" width="10.4" height="2.4" fill="#48a8f0"/><path d="M4,12.2 L13.4,2.8" stroke="#c87820" stroke-width="3.4" stroke-linecap="round"/><path d="M4.6,11.6 L12.8,3.4" stroke="#f8dc40" stroke-width="2" /><path d="M5.2,11 L12.2,4" stroke="#fff4a0" stroke-width="0.6" stroke-dasharray="1 0.8"/><circle cx="13.4" cy="2.8" r="1.5" fill="#f0c8a0" stroke="#c87820" stroke-width="0.6"/><path d="M3,13.2 L3.6,10.8 L5.4,12.6 Z" fill="#f4d8b8" stroke="#a86018" stroke-width="0.4"/><path d="M3,13.2 L3.4,12 L4.2,12.8 Z" fill="#403020"/></svg>
<div class="a" style="left:889px;top:27px;width:584px;height:2px;background:#fff;"></div>
<div class="a" style="left:889px;top:27px;width:2px;height:559px;background:#fff;"></div>
<div class="a" style="left:889px;top:586px;width:584px;height:2px;background:#fff;"></div>
<div class="a" style="left:891px;top:29px;width:590px;height:557px;border:1px solid #8f939c;box-sizing:border-box;background:#fff;"></div>
<div class="a" id="dec" style="left:857px;top:30px;width:616px;height:540px;overflow:hidden;">
<div class="a mono" style="left:0;top:-4px;width:30px;text-align:right;">8</div>
<div class="a mono" style="left:49px;top:-4px;"><span class="t">undefined4</span> <span class="v">local_338</span>;</div>
<div class="a mono" style="left:0;top:12px;width:30px;text-align:right;">9</div>
<div class="a mono" style="left:49px;top:12px;"><span class="t">undefined2</span> <span class="v">local_334</span>;</div>
<div class="a mono" style="left:0;top:28px;width:30px;text-align:right;">10</div>
<div class="a mono" style="left:49px;top:28px;"><span class="t">undefined1</span> <span class="v">local_332</span>;</div>
<div class="a mono" style="left:0;top:44px;width:30px;text-align:right;">11</div>
<div class="a mono" style="left:49px;top:44px;"><span class="t">undefined1</span> <span class="v">serial_number_result</span> [<span class="c">32</span>];</div>
<div class="a mono" style="left:0;top:60px;width:30px;text-align:right;">12</div>
<div class="a mono" style="left:49px;top:60px;"><span class="t">char</span> <span class="v">acStack_308</span> [<span class="c">256</span>];</div>
<div class="a mono" style="left:0;top:76px;width:30px;text-align:right;">13</div>
<div class="a mono" style="left:49px;top:76px;"><span class="t">undefined1</span> <span class="v">auStack_208</span> [<span class="c">24</span>];</div>
<div class="a mono" style="left:0;top:92px;width:30px;text-align:right;">14</div>
<div class="a mono" style="left:49px;top:92px;"><span class="t">char</span> <span class="v">acStack_1f0</span> [<span class="c">232</span>];</div>
<div class="a mono" style="left:0;top:108px;width:30px;text-align:right;">15</div>
<div class="a mono" style="left:49px;top:108px;"><span class="t">char</span> <span class="v">acStack_108</span> [<span class="c">256</span>];</div>
<div class="a mono" style="left:0;top:124px;width:30px;text-align:right;">16</div>
<div class="a mono" style="left:0;top:140px;width:30px;text-align:right;">17</div>
<div class="a mono" style="left:49px;top:140px;"><span class="v">iVar3</span> = <span class="f">access</span>(<span class="c">&quot;/opt/ch/flag.set.passwd&quot;</span>,<span class="c">0</span>);</div>
<div class="a mono" style="left:0;top:156px;width:30px;text-align:right;">18</div>
<div class="a mono" style="left:49px;top:156px;"><span class="t">if</span> (<span class="v">iVar3</span> != <span class="c">-1</span>) {</div>
<div class="a mono" style="left:0;top:172px;width:30px;text-align:right;">19</div>
<div class="a mono" style="left:63px;top:172px;"><span class="v">pcVar2</span> = (<span class="t">char</span> *)&amp;<span class="v">local_338</span>;</div>
<div class="a mono" style="left:0;top:188px;width:30px;text-align:right;">20</div>
<div class="a mono" style="left:63px;top:188px;"><span class="f">GetSN</span>(<span class="v">serial_number_result</span>);</div>
<div class="a mono" style="left:0;top:204px;width:30px;text-align:right;">21</div>
<div class="a mono" style="left:63px;top:204px;"><span class="f">memset</span>(<span class="v">acStack_308</span>,<span class="c">0</span>,<span class="c">0x100</span>);</div>
<div class="a mono" style="left:0;top:220px;width:30px;text-align:right;">22</div>
<div class="a mono" style="left:63px;top:220px;"><span class="f">memset</span>(<span class="v">auStack_208</span>,<span class="c">0</span>,<span class="c">0x100</span>);</div>
<div class="a mono" style="left:0;top:236px;width:30px;text-align:right;">23</div>
<div class="a mono" style="left:63px;top:236px;"><span class="f">sprintf</span>(<span class="v">acStack_308</span>,<span class="c">&quot;%s%s&quot;</span>,<span class="c">&quot;ANJVISION&quot;</span>,<span class="v">serial_number_result</span>);</div>
<div class="a mono" style="left:0;top:252px;width:30px;text-align:right;">24</div>
<div class="a" style="left:1px;top:253px;width:14px;height:14px;border-radius:50%;background:#0068b4"></div>
<div class="a mono" style="left:63px;top:252px;"><span class="v">sVar1</span> = <span class="f">strlen</span>(<span class="v">acStack_308</span>);</div>
<div class="a mono" style="left:0;top:268px;width:30px;text-align:right;">25</div>
<div class="a mono" style="left:63px;top:268px;"><span class="f">our_md5_encode</span>(<span class="v">auStack_208</span>,<span class="v">acStack_308</span>,<span class="v">sVar1</span>);</div>
<div class="a mono" style="left:0;top:284px;width:30px;text-align:right;">26</div>
<div class="a mono" style="left:63px;top:284px;"><span class="t">if</span> (<span class="g">DAT_0005f84c</span> == <span class="c">0x1106</span>) {</div>
<div class="a mono" style="left:0;top:300px;width:30px;text-align:right;">27</div>
<div class="a mono" style="left:77px;top:300px;"><span class="v">local_338</span> = <span class="c">0x31313131</span>;</div>
<div class="a mono" style="left:0;top:316px;width:30px;text-align:right;">28</div>
<div class="a mono" style="left:77px;top:316px;"><span class="v">local_334</span> = <span class="c">0x3131</span>;</div>
<div class="a mono" style="left:0;top:332px;width:30px;text-align:right;">29</div>
<div class="a mono" style="left:77px;top:332px;"><span class="v">local_332</span> = <span class="c">0</span>;</div>
<div class="a mono" style="left:0;top:348px;width:30px;text-align:right;">30</div>
<div class="a mono" style="left:63px;top:348px;">}</div>
<div class="a mono" style="left:0;top:364px;width:30px;text-align:right;">31</div>
<div class="a mono" style="left:63px;top:364px;"><span class="t">else</span> {</div>
<div class="a mono" style="left:0;top:380px;width:30px;text-align:right;">32</div>
<div class="a mono" style="left:77px;top:380px;"><span class="v">pcVar2</span> = <span class="f">strcpy</span>((<span class="t">char</span> *)&amp;<span class="v">local_338</span>,<span class="v">acStack_1f0</span>);</div>
<div class="a mono" style="left:0;top:396px;width:30px;text-align:right;">33</div>
<div class="a mono" style="left:63px;top:396px;">}</div>
<div class="a mono" style="left:0;top:412px;width:30px;text-align:right;">34</div>
<div class="a" style="left:1px;top:413px;width:14px;height:14px;border-radius:50%;background:#0068b4"></div>
<div class="a mono" style="left:63px;top:412px;"><span class="f">sprintf</span>(<span class="v">acStack_108</span>,<span class="c">&quot;echo -e \&quot;%s\n%s\&quot; | passwd root&quot;</span>,<span class="v hl">pcVar2</span>);</div>
<div class="a mono" style="left:0;top:428px;width:30px;text-align:right;">35</div>
<div class="a" style="left:1px;top:429px;width:14px;height:14px;border-radius:50%;background:#0068b4"></div>
<div class="a mono" style="left:63px;top:428px;"><span class="f">system</span>(<span class="v">acStack_108</span>);</div>
<div class="a mono" style="left:0;top:444px;width:30px;text-align:right;">36</div>
<div class="a mono" style="left:63px;top:444px;"><span class="f">system</span>(<span class="v">acStack_108</span>);</div>
<div class="a mono" style="left:0;top:460px;width:30px;text-align:right;">37</div>
<div class="a mono" style="left:63px;top:460px;"><span class="t">return</span>;</div>
<div class="a mono" style="left:0;top:476px;width:30px;text-align:right;">38</div>
<div class="a mono" style="left:49px;top:476px;">}</div>
<div class="a mono" style="left:0;top:492px;width:30px;text-align:right;">39</div>
<div class="a mono" style="left:49px;top:492px;"><span class="t">return</span>;</div>
<div class="a mono" style="left:0;top:508px;width:30px;text-align:right;">40</div>
<div class="a mono" style="left:35px;top:508px;">}</div>
<div class="a mono" style="left:0;top:524px;width:30px;text-align:right;">41</div>
<div class="a" style="left:469px;top:412px;width:2px;height:16px;background:#ffa6b8"></div>
</div>
<div class="a" style="left:892px;top:570px;width:581px;height:15px;overflow:hidden;"><svg style="left:0px;top:0px" width="620" height="15" viewBox="0 0 620 15"><rect x="0" y="0" width="620" height="15" fill="url(#htr)"/><rect x="17" y="0" width="13" height="13" fill="url(#rsh)"/><rect x="0" y="0" width="13" height="13" fill="url(#rsh)" transform="translate(603,0) scale(-1,1)"/><path d="M17,0 A14.25,14.5 0 0 0 31.25,14.5 H545.75 A14.25,14.5 0 0 0 560,0 Z" fill="url(#hth)"/><path d="M17,0 A14.25,14.5 0 0 0 31.25,14.5 H545.75 A14.25,14.5 0 0 0 560,0" fill="none" stroke="#2c4a68" stroke-width="1.1"/><path d="M0,0 V15 H25.5 C20,15 17,10 17,0 Z" fill="url(#hbt)"/><path d="M12,4 L5,7.5 L12,11 Z" fill="#3a3a3a"/><path d="M620,0 V15 H594.5 C600,15 603,10 603,0 Z" fill="url(#hbt)"/><rect x="619" y="0" width="1" height="15" fill="#b4b7bd"/><path d="M608,4 L615,7.5 L608,11 Z" fill="#3a3a3a"/></svg></div>
<!-- bottom tabs -->
<div class="a" style="left:857px;top:588px;width:616px;height:1px;background:#0c1828;"></div>
<div class="a" style="left:857px;top:589px;width:616px;height:3px;background:linear-gradient(180deg,#bfd3ea,#a9bfd8);"></div>
<div class="a" style="left:1086px;top:592px;width:115px;height:23px;border:1px solid #6a6e78;border-top-color:#14141e;border-radius:0 0 5px 5px;box-sizing:border-box;background:linear-gradient(180deg,#d7dae0 0%,#e0e2e7 50%,#f2f3f5 100%);"></div>
<div class="a" style="left:1201px;top:592px;width:131px;height:23px;border:1px solid #6a6e78;border-top-color:#14141e;border-radius:0 0 5px 5px;box-sizing:border-box;background:linear-gradient(180deg,#d7dae0 0%,#e0e2e7 50%,#f2f3f5 100%);"></div>
<div class="a" style="left:867px;top:591px;width:219px;height:24px;border:1px solid #1c3048;border-top:none;border-radius:0 0 5px 5px;box-sizing:border-box;background:linear-gradient(180deg,#a9bfd8 0%,#a6bad2 20%,#bccde0 50%,#e4ebf3 82%,#f6f8fb 100%);"></div>
<svg style="left:875.5px;top:594px" width="16" height="16" viewBox="0 0 16 16"><path d="M9.4,4.6 A4.2,4.4 0 1 0 9.4,9.4" fill="none" stroke="#3399ff" stroke-width="2.8"/><path d="M15,7.6 Q12.8,6.4 12.4,9 L11.6,14 Q11.2,16.6 9,15.8" fill="none" stroke="#e000e0" stroke-width="2"/><path d="M10.4,10.4 H15.4" stroke="#e000e0" stroke-width="1.6"/></svg>
<div class="ui" style="left:896px;top:597px;letter-spacing:0.28px">Decompile: set_passwor...</div>
<svg style="left:1067px;top:599px" width="7" height="7" viewBox="0 0 7 7"><path d="M0.5,0.5 L6.5,6.5 M6.5,0.5 L0.5,6.5" stroke="#000" stroke-width="1.25" fill="none"/></svg>
<svg style="left:1095px;top:597px" width="14" height="12" viewBox="0 0 14 12"><path d="M0,0 H13.9 V11.9 H6 V8.7 H2 V5.8 H0 Z" fill="#626262"/><rect x="2" y="2" width="10" height="2" fill="#fff"/><rect x="4" y="5.1" width="2" height="2" fill="#fff"/><rect x="7.2" y="5.1" width="4.8" height="2" fill="#fff"/><rect x="8" y="8.3" width="4" height="1.9" fill="#fff"/></svg>
<div class="ui" style="left:1115px;top:597px;letter-spacing:0.4px">Registers</div>
<svg style="left:1182px;top:599px" width="7" height="7" viewBox="0 0 7 7"><path d="M0.5,0.5 L6.5,6.5 M6.5,0.5 L0.5,6.5" stroke="#000" stroke-width="1.25" fill="none"/></svg>
<svg style="left:1209.8px;top:595.8px" width="15" height="15" viewBox="0 0 15 15"><circle cx="7.1" cy="7.1" r="7.1" fill="#0d6cb5"/><path d="M3.4,3.6 A5.2,5.2 0 0 1 10.8,11 Z" fill="#fff"/></svg>
<div class="ui" style="left:1230px;top:597px;letter-spacing:0.33px">Breakpoints</div>
<svg style="left:1313px;top:599px" width="7" height="7" viewBox="0 0 7 7"><path d="M0.5,0.5 L6.5,6.5 M6.5,0.5 L0.5,6.5" stroke="#000" stroke-width="1.25" fill="none"/></svg>
</div>
</body>
</html>
